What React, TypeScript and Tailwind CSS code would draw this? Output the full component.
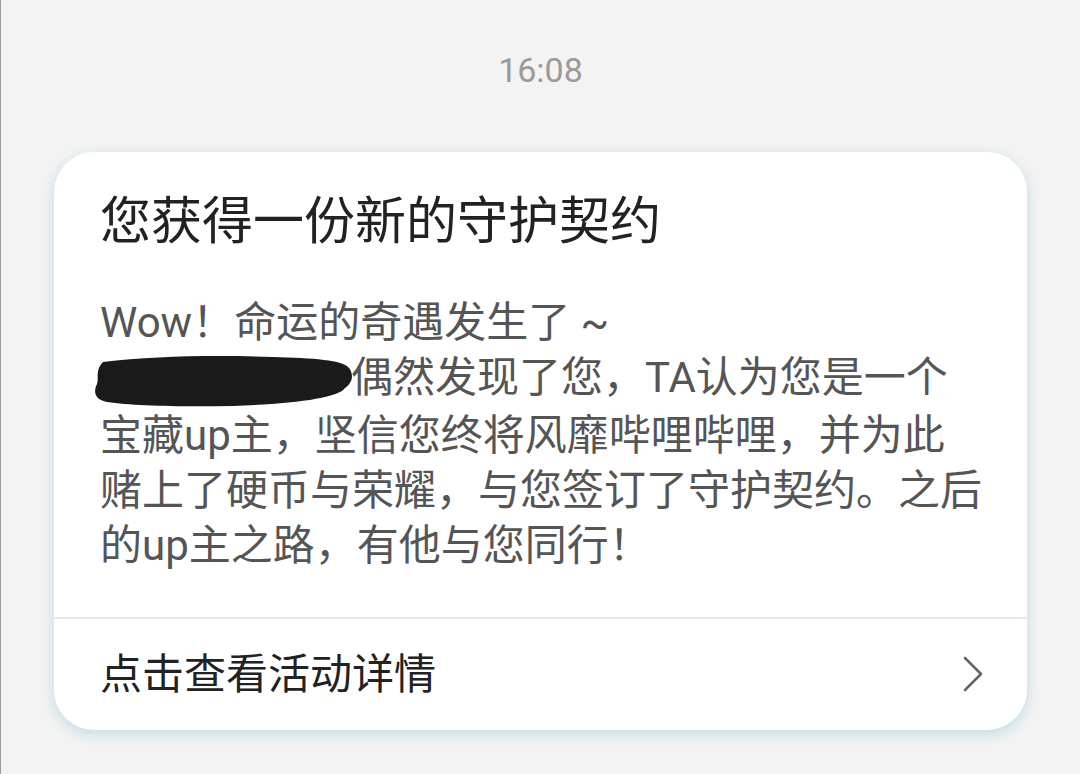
const font = { fontFamily: 'Roboto, "Noto Sans CJK SC", sans-serif' };

const lines = [
  "宝藏up主，坚信您终将风靡哔哩哔哩，并为此",
  "赌上了硬币与荣耀，与您签订了守护契约。之后",
  "的up主之路，有他与您同行！",
];

const Redacted = () => (
  <svg
    width="262"
    height="54"
    viewBox="0 0 262 54"
    className="inline-block align-middle -ml-[7px] -mr-[4px]"
  >
    <path
      d="M10 8 C60 2 120 1 180 3 C220 4 250 6 256 14 C262 22 258 30 252 34 C246 44 200 50 140 52 C90 53 40 52 14 48 C2 46 0 38 4 30 C6 24 2 16 10 8 Z"
      fill="#1a1a1a"
    />
  </svg>
);

const App = () => {
  return (
    <div
      className="w-[1080px] h-[774px] bg-[#f3f3f3] border-l border-[#9a9a9a] overflow-hidden"
      style={font}
    >
      <div className="h-[152px] pt-[50px] text-center text-[34px] leading-[40px] text-[#9a9a9a]">
        16:08
      </div>

      <div className="ml-[53px] mr-[53px] bg-white rounded-[40px] shadow-[0_4px_14px_rgba(150,200,220,0.55)]">
        <div className="px-[46px] pt-[40px] pb-[44px]">
          <h1 className="text-[51px] leading-[60px] text-[#222222] font-normal">
            您获得一份新的守护契约
          </h1>
          <div className="mt-[43px] text-[42px] leading-[55px] text-[#555555]">
            <div>Wow！命运的奇遇发生了 ~</div>
            <div className="whitespace-nowrap">
              <Redacted />
              偶然发现了您，TA认为您是一个
            </div>
            {lines.map((line, i) => (
              <div key={i} className="whitespace-nowrap">
                {line}
              </div>
            ))}
          </div>
        </div>
        <div className="h-[2px] bg-[#e8e8e8]" />
        <div className="h-[111px] flex items-center justify-between pl-[46px] pr-[44px]">
          <span className="text-[42px] text-[#222222]">点击查看活动详情</span>
          <svg width="20" height="36" viewBox="0 0 20 36" fill="none">
            <polyline
              points="2,2 18,18 2,34"
              stroke="#666666"
              strokeWidth="2.6"
              strokeLinecap="round"
              strokeLinejoin="round"
            />
          </svg>
        </div>
      </div>
    </div>
  );
};

export default App;
